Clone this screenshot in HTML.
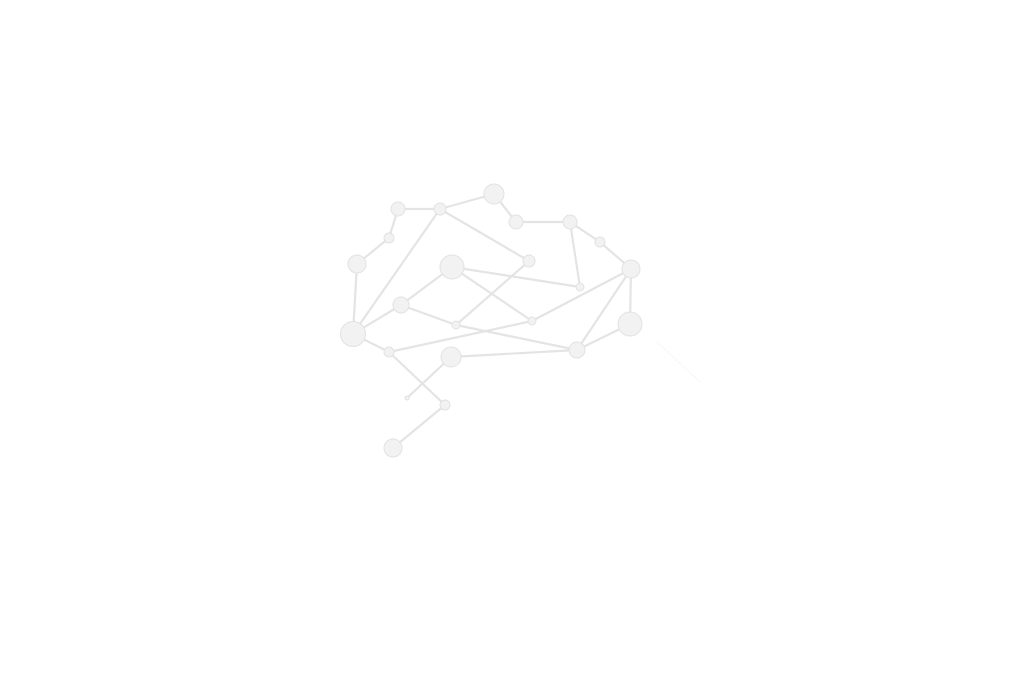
<!DOCTYPE html>
<html><head><meta charset="utf-8"><style>
html,body{margin:0;padding:0;background:#fff;width:1024px;height:683px;overflow:hidden}
svg{display:block}
</style></head><body>
<svg width="1024" height="683" viewBox="0 0 1024 683">
<g stroke="#e4e4e4" stroke-width="2.2" fill="none" stroke-linecap="round">
<line x1="398" y1="209" x2="440" y2="209"/>
<line x1="440" y1="209" x2="494" y2="194"/>
<line x1="494" y1="194" x2="516" y2="222"/>
<line x1="516" y1="222" x2="570" y2="222"/>
<line x1="570" y1="222" x2="600" y2="242"/>
<line x1="600" y1="242" x2="631" y2="269"/>
<line x1="570" y1="222" x2="580" y2="287"/>
<line x1="398" y1="209" x2="389" y2="238"/>
<line x1="389" y1="238" x2="357" y2="264"/>
<line x1="357" y1="264" x2="353" y2="334"/>
<line x1="353" y1="334" x2="440" y2="209"/>
<line x1="440" y1="209" x2="529" y2="261"/>
<line x1="529" y1="261" x2="456" y2="325"/>
<line x1="452" y1="267" x2="580" y2="287"/>
<line x1="452" y1="267" x2="401" y2="305"/>
<line x1="452" y1="267" x2="532" y2="321"/>
<line x1="401" y1="305" x2="353" y2="334"/>
<line x1="401" y1="305" x2="456" y2="325"/>
<line x1="456" y1="325" x2="577" y2="350"/>
<line x1="353" y1="334" x2="389" y2="352"/>
<line x1="389" y1="352" x2="532" y2="321"/>
<line x1="532" y1="321" x2="631" y2="269"/>
<line x1="631" y1="269" x2="577" y2="350"/>
<line x1="631" y1="269" x2="630" y2="324"/>
<line x1="630" y1="324" x2="577" y2="350"/>
<line x1="451" y1="357" x2="577" y2="350"/>
<line x1="389" y1="352" x2="445" y2="405"/>
<line x1="451" y1="357" x2="407" y2="398"/>
<line x1="445" y1="405" x2="393" y2="448"/>
</g>
<g stroke="#f7f7f7" stroke-width="1">
<line x1="655" y1="340" x2="700" y2="382"/>
</g>
<g fill="#f2f2f2" stroke="#e2e2e2" stroke-width="1">
<circle cx="398" cy="209" r="7"/>
<circle cx="440" cy="209" r="6"/>
<circle cx="494" cy="194" r="10"/>
<circle cx="516" cy="222" r="7"/>
<circle cx="570" cy="222" r="7"/>
<circle cx="600" cy="242" r="5"/>
<circle cx="631" cy="269" r="9"/>
<circle cx="389" cy="238" r="5"/>
<circle cx="357" cy="264" r="9"/>
<circle cx="452" cy="267" r="12"/>
<circle cx="529" cy="261" r="6"/>
<circle cx="580" cy="287" r="4"/>
<circle cx="401" cy="305" r="8"/>
<circle cx="456" cy="325" r="4"/>
<circle cx="532" cy="321" r="4"/>
<circle cx="630" cy="324" r="12"/>
<circle cx="353" cy="334" r="12.5"/>
<circle cx="389" cy="352" r="5"/>
<circle cx="451" cy="357" r="10"/>
<circle cx="577" cy="350" r="8"/>
<circle cx="407" cy="398" r="2"/>
<circle cx="445" cy="405" r="5"/>
<circle cx="393" cy="448" r="9"/>
</g>
</svg>
</body></html>
